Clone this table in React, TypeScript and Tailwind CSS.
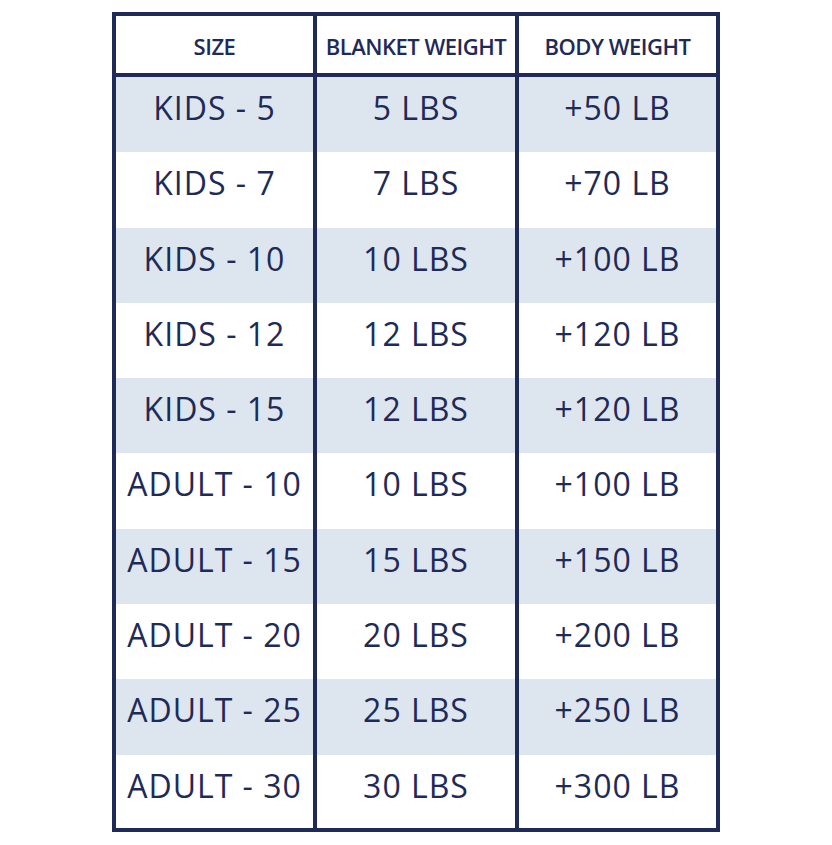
const rows = [
  ["KIDS - 5", "5 LBS", "+50 LB"],
  ["KIDS - 7", "7 LBS", "+70 LB"],
  ["KIDS - 10", "10 LBS", "+100 LB"],
  ["KIDS - 12", "12 LBS", "+120 LB"],
  ["KIDS - 15", "12 LBS", "+120 LB"],
  ["ADULT - 10", "10 LBS", "+100 LB"],
  ["ADULT - 15", "15 LBS", "+150 LB"],
  ["ADULT - 20", "20 LBS", "+200 LB"],
  ["ADULT - 25", "25 LBS", "+250 LB"],
  ["ADULT - 30", "30 LBS", "+300 LB"],
];

const headers = ["SIZE", "BLANKET WEIGHT", "BODY WEIGHT"];

export default function App() {
  return (
    <div
      className="min-h-[845px] w-full bg-white pt-[12px] text-[#1e2a58]"
      style={{ fontFamily: '"Open Sans", "Noto Sans", sans-serif' }}
    >
      <div className="mx-auto flex h-[820px] w-[608px] flex-col border-4 border-[#1e2a58]">
        {/* header */}
        <div className="grid h-[61px] shrink-0 grid-cols-[201px_202px_197px] border-b-4 border-[#1e2a58]">
          {headers.map((h, i) => (
            <div
              key={h}
              className={
                "flex items-center justify-center pt-[4px] text-[22px] font-semibold tracking-[-0.5px] whitespace-nowrap" +
                (i < 2 ? " border-r-4 border-[#1e2a58]" : "")
              }
            >
              {h}
            </div>
          ))}
        </div>

        {/* rows */}
        {rows.map((row, r) => (
          <div
            key={r}
            className={
              "grid grid-cols-[201px_202px_197px]" +
              (r === rows.length - 1 ? " flex-1" : " h-[75.3px] shrink-0") +
              (r % 2 === 0 ? " bg-[#dde6ee]" : " bg-white")
            }
          >
            {row.map((cell, i) => (
              <div
                key={i}
                className={
                  "flex items-start justify-center pt-[7px] text-[32px] tracking-[1px] whitespace-nowrap" +
                  (i < 2 ? " border-r-4 border-[#1e2a58]" : "")
                }
              >
                {cell}
              </div>
            ))}
          </div>
        ))}
      </div>
    </div>
  );
}
